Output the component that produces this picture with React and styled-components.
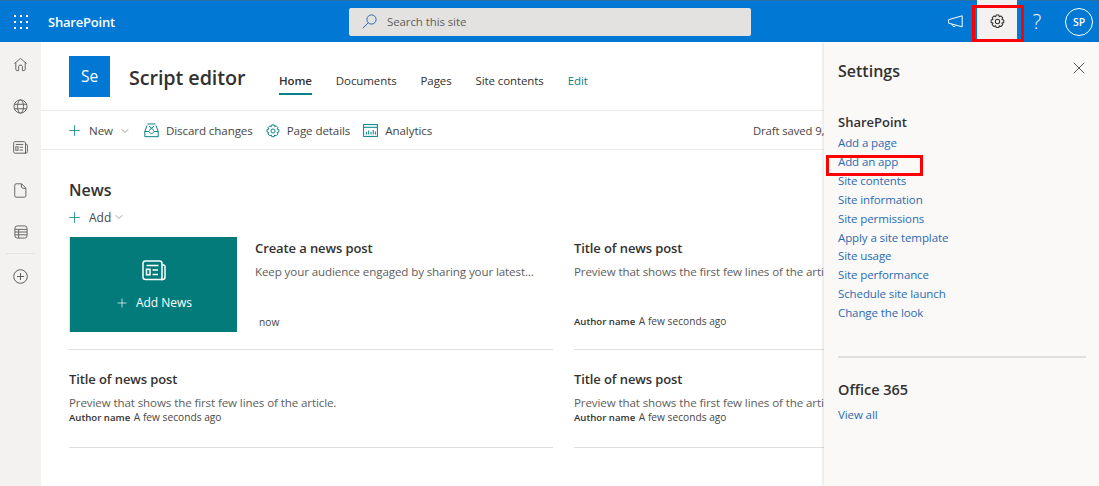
import styled, { createGlobalStyle } from "styled-components";
import { Plus, ChevronDown, X } from "lucide-react";

const Global = createGlobalStyle`
  html, body { margin: 0; padding: 0; background: #fff; }
  body { font-family: "Open Sans", "Noto Sans", sans-serif; color: #323130; overflow: hidden; }
`;

const Page = styled.div`
  position: relative;
  width: 1099px;
  height: 486px;
  overflow: hidden;
  display: flex;
  flex-direction: column;
`;

const TopBar = styled.header`
  height: 41px;
  flex: none;
  background: #0078d4;
  border-top: 1px solid #2b6ea8;
  display: flex;
  align-items: center;
  color: #fff;
`;

const Waffle = styled.div`
  width: 14px;
  height: 14px;
  margin-left: 14px;
  display: grid;
  grid-template-columns: repeat(3, 2px);
  grid-template-rows: repeat(3, 2px);
  gap: 4px;
  span { background: #fff; }
`;

const Brand = styled.div`
  margin-left: 20px;
  width: 301px;
  font-size: 13px;
  font-weight: 600;
  letter-spacing: -0.2px;
`;

const Search = styled.div`
  width: 402px;
  height: 28px;
  background: #e4e2e0;
  border-radius: 2px;
  display: flex;
  align-items: center;
  gap: 10px;
  padding-left: 13px;
  box-sizing: border-box;
  color: #605e5c;
  font-size: 11.5px;
  letter-spacing: -0.1px;
  line-height: 30px;
`;

const BarIcons = styled.div`
  margin-left: auto;
  display: flex;
  align-items: center;
  height: 100%;
`;

const BarButton = styled.div`
  width: ${(p) => p.$w || 40}px;
  height: 42px;
  margin-top: -1px;
  display: flex;
  align-items: center;
  justify-content: center;
  box-sizing: border-box;
  color: ${(p) => (p.$active ? "#323130" : "#fff")};
  background: ${(p) => (p.$active ? "#f3f2f1" : "transparent")};
  font-size: 20px;
  font-weight: 300;
`;

const Avatar = styled.div`
  width: 28px;
  height: 28px;
  border: 1px solid #fff;
  border-radius: 50%;
  box-sizing: border-box;
  display: flex;
  align-items: center;
  justify-content: center;
  font-size: 10.5px;
  font-weight: 600;
  color: #fff;
  margin: 0 6px 0 8px;
`;

const Body = styled.div`
  flex: 1;
  display: flex;
  min-height: 0;
`;

const Rail = styled.nav`
  width: 41px;
  flex: none;
  background: #f3f2f1;
  display: flex;
  flex-direction: column;
  align-items: center;
  padding-top: 13.5px;
  box-sizing: border-box;
  color: #605e5c;
`;

const RailItem = styled.div`
  height: 42.2px;
  width: 100%;
  display: flex;
  justify-content: center;
  padding-top: 1px;
  box-sizing: border-box;
`;

const RailRule = styled.div`
  width: 29px;
  height: 1px;
  background: #e6e4e2;
  margin: -13.5px 0 14px;
`;

const Main = styled.main`
  flex: 1;
  min-width: 0;
  overflow: hidden;
`;

const SiteHeader = styled.div`
  height: 68px;
  padding-left: 28px;
  display: flex;
  align-items: center;
  border-bottom: 1px solid #edebe9;
`;

const SiteLogo = styled.div`
  width: 41px;
  height: 41px;
  background: #0078d4;
  color: #fff;
  display: flex;
  align-items: center;
  justify-content: center;
  font-size: 15.5px;
`;

const SiteTitle = styled.div`
  margin-left: 19px;
  width: 150px;
  font-size: 19.8px;
  font-weight: 600;
  letter-spacing: -0.1px;
  padding-top: 2px;
  color: #323130;
`;

const SiteNav = styled.div`
  display: flex;
  gap: 24px;
  align-self: stretch;
  align-items: center;
  padding-top: 11px;
  box-sizing: border-box;
`;

const NavLink = styled.div`
  font-size: 11.5px;
  letter-spacing: -0.1px;
  line-height: 24px;
  color: ${(p) => (p.$edit ? "#038387" : "#323130")};
  font-weight: ${(p) => (p.$on ? 600 : 400)};
  border-bottom: 2px solid ${(p) => (p.$on ? "#038387" : "transparent")};
`;

const CommandBar = styled.div`
  height: 39px;
  padding: 1px 0 0 28px;
  box-sizing: border-box;
  display: flex;
  align-items: center;
  border-bottom: 1px solid #edebe9;
  font-size: 11.6px;
  letter-spacing: -0.1px;
  color: #484644;
  white-space: nowrap;
`;

const Command = styled.div`
  display: flex;
  align-items: center;
  gap: ${(p) => p.$gap || 7}px;
  margin-right: ${(p) => p.$mr || 13}px;
  color: #484644;
`;

const TealPlus = styled(Plus)`
  margin-left: -3px;
  color: #038387;
`;

const Draft = styled.div`
  margin-left: auto;
  width: 71px;
  overflow: hidden;
  flex: none;
  font-size: 11.3px;
`;

const Content = styled.div`
  padding: 30px 0 0 28px;
`;

const SectionTitle = styled.div`
  font-size: 16px;
  font-weight: 600;
  line-height: 20px;
  color: #323130;
`;

const AddRow = styled.div`
  display: flex;
  align-items: center;
  gap: 6px;
  margin-top: 7px;
  height: 20px;
  font-size: 12px;
  color: #484644;
`;

const AddChevron = styled(ChevronDown)`
  margin-left: -4px;
  color: #605e5c;
`;

const NewsGrid = styled.div`
  display: grid;
  grid-template-columns: 484px 484px;
  column-gap: 21px;
  margin-top: 10px;
  width: 990px;
`;

const NewsItem = styled.div`
  height: ${(p) => p.$h}px;
  border-bottom: 1px solid #e1dfdd;
  box-sizing: border-box;
  display: flex;
  padding-top: ${(p) => p.$pt || 0}px;
`;

const AddTile = styled.div`
  width: 168px;
  height: 95px;
  background: #037b7b;
  border-left: 1px solid #d8e8e8;
  box-sizing: border-box;
  flex: none;
  color: #fff;
  display: flex;
  flex-direction: column;
  align-items: center;
  font-size: 12px;
  padding-top: 23px;
`;

const TileAction = styled.div`
  display: flex;
  align-items: center;
  gap: 7px;
  margin-top: 14px;
  line-height: 16px;
`;

const NewsText = styled.div`
  flex: 1;
  min-width: 0;
  margin-left: ${(p) => p.$ml || 0}px;
  height: 95px;
  display: flex;
  flex-direction: column;
`;

const NewsTitle = styled.div`
  font-size: 13px;
  font-weight: 600;
  line-height: 18px;
  letter-spacing: -0.1px;
  margin-top: 2px;
  color: #323130;
`;

const NewsPreview = styled.div`
  font-size: 11.6px;
  line-height: 16px;
  letter-spacing: -0.12px;
  margin-top: 7px;
  color: #605e5c;
  white-space: nowrap;
`;

const NewsMeta = styled.div`
  font-size: 10.2px;
  line-height: 14px;
  color: #484644;
  margin-top: ${(p) => (p.$bottom ? "auto" : "-1px")};
  padding-left: ${(p) => p.$pl || 0}px;
  padding-bottom: ${(p) => (p.$bottom ? 3 : 0)}px;
  b { font-size: 9.6px; font-weight: 600; color: #323130; margin-right: 1px; }
`;

const Panel = styled.aside`
  width: 275px;
  flex: none;
  background: #faf9f8;
  box-shadow: -1px 0 3px rgba(0, 0, 0, 0.12);
  box-sizing: border-box;
  padding: 18px 13px 0 14px;
  position: relative;
  z-index: 1;
`;

const PanelHead = styled.div`
  display: flex;
  justify-content: space-between;
  align-items: center;
  height: 22px;
  font-size: 16px;
  font-weight: 600;
  color: #323130;
`;

const CloseButton = styled.div`
  display: flex;
  color: #484644;
  margin: 0 -3px 6px 0;
`;

const PanelHeading = styled.div`
  font-size: ${(p) => p.$size || 13}px;
  font-weight: 600;
  line-height: 18px;
  color: #323130;
  margin-top: ${(p) => p.$top}px;
`;

const LinkList = styled.div`
  margin-top: ${(p) => p.$top || 3}px;
  display: flex;
  flex-direction: column;
`;

const PanelLink = styled.div`
  font-size: 11.5px;
  line-height: 18.9px;
  letter-spacing: -0.1px;
  color: #2b6ab0;
`;

const PanelRule = styled.div`
  height: 2px;
  background: #e1dfdd;
  margin: 33px 0 0;
`;

const Annotation = styled.div`
  position: absolute;
  left: ${(p) => p.$x}px;
  top: ${(p) => p.$y}px;
  width: ${(p) => p.$w}px;
  height: ${(p) => p.$h}px;
  border: 3px solid #f00;
  box-sizing: border-box;
  pointer-events: none;
  z-index: 5;
`;

const HomeIcon = () => (
  <svg width="15" height="15" viewBox="0 0 16 16" fill="none" stroke="currentColor" strokeWidth="1">
    <path d="M1.5 7L8 1.5 14.5 7M3 6v7.2c0 .7.5 1.3 1.2 1.3H6V10c0-.8.6-1.3 1.3-1.3h1.4c.7 0 1.3.5 1.3 1.3v4.5h1.8c.7 0 1.2-.6 1.2-1.3V6" />
  </svg>
);

const GlobeIcon = () => (
  <svg width="15" height="15" viewBox="0 0 16 16" fill="none" stroke="currentColor" strokeWidth="1">
    <circle cx="8" cy="8" r="7" />
    <ellipse cx="8" cy="8" rx="3.2" ry="7" />
    <path d="M1.3 5.6h13.4M1.3 10.4h13.4" />
  </svg>
);

const NewsIcon = ({ size = 15 }) => (
  <svg width={size} height={size * 0.875} viewBox="0 0 24 21" fill="none" stroke="currentColor" strokeWidth="1.5">
    <path d="M1 3.5C1 2.1 2 1 3.5 1h14C19 1 20 2.1 20 3.5v16H3.5C2 19.5 1 18.4 1 17z" />
    <path d="M20 5h1.5c.9 0 1.5.7 1.5 1.5V17c0 1.4-1.1 2.5-2.5 2.5H19" />
    <path d="M4.5 5.5h12M10.5 10h5.5M10.5 14.5h5.5" />
    <rect x="4.5" y="9.3" width="3.5" height="5.5" />
  </svg>
);

const PageIcon = () => (
  <svg width="13" height="15" viewBox="0 0 14 16" fill="none" stroke="currentColor" strokeWidth="1">
    <path d="M2.2.8h6l4.6 4.6v8.4c0 .8-.6 1.4-1.4 1.4H2.2c-.8 0-1.4-.6-1.4-1.4V2.2C.8 1.4 1.4.8 2.2.8zM8 1v3.2c0 .8.6 1.4 1.4 1.4h3.4" />
  </svg>
);

const ListIcon = () => (
  <svg width="14" height="14" viewBox="0 0 15 15" fill="none" stroke="currentColor" strokeWidth="1">
    <rect x="1" y="1" width="13" height="13" rx="2.5" />
    <path d="M1 4.7h13M1 7.5h13M1 10.5h13M5 4.7V14" />
  </svg>
);

const CirclePlus = () => (
  <svg width="15" height="15" viewBox="0 0 15 15" fill="none" stroke="currentColor" strokeWidth="1">
    <circle cx="7.5" cy="7.5" r="6.8" />
    <path d="M7.5 4v7M4 7.5h7" />
  </svg>
);

const SearchIcon = () => (
  <svg width="15" height="15" viewBox="0 0 15 15" fill="none" stroke="#2b6ab0" strokeWidth="1">
    <circle cx="9.5" cy="5.5" r="4.6" />
    <path d="M6.2 8.8L.8 14.2" />
  </svg>
);

const MegaphoneIcon = () => (
  <svg width="15" height="13" viewBox="0 0 15 13" fill="none" stroke="currentColor" strokeWidth="1">
    <path d="M.7 4.7L14.2.8v11L.7 8.2c-.3-1-.3-2.5 0-3.5zM4 9.2c0 1.7 1.6 2.8 3.3 2.1" />
  </svg>
);

const GearIcon = ({ size = 14, color = "currentColor" }) => (
  <svg width={size} height={size} viewBox="0 0 16 16" fill="none" stroke={color} strokeWidth="1.1">
    <circle cx="8" cy="8" r="2.3" />
    <path d="M6.6 1h2.8l.5 2 1.7-.9 2 2-.9 1.7 2 .6v2.8l-2 .5.9 1.7-2 2-1.7-.9-.5 2H6.6l-.6-2-1.7.9-2-2 .9-1.7-2-.5V6.4l2-.6-.9-1.7 2-2 1.7.9z" strokeLinejoin="round" />
  </svg>
);

const DiscardIcon = () => (
  <svg width="15" height="15" viewBox="0 0 15 15" fill="none" stroke="#038387" strokeWidth="1">
    <path d="M.8 8.5L3 2.5M14.2 8.5L12 2.5M3.5 1h8M.8 8.5v5.2h13.4V8.5H10c-.3 1.2-1.3 2-2.5 2S5.3 9.7 5 8.5zM5 3l5 4.5M10 3L5 7.5" />
  </svg>
);

const ChartIcon = () => (
  <svg width="15" height="13" viewBox="0 0 15 13" fill="none" stroke="#038387" strokeWidth="1">
    <rect x=".6" y=".6" width="13.8" height="11.8" />
    <path d="M.6 3.3h13.8M3.5 10.5V8M5.7 10.5V6.5M8 10.5V8M10.2 10.5V6M12.4 10.5V7.5" />
  </svg>
);

const railIcons = [
  <HomeIcon key="home" />,
  <GlobeIcon key="globe" />,
  <NewsIcon key="news" />,
  <PageIcon key="page" />,
  <ListIcon key="list" />,
];

const sharePointLinks = [
  "Add a page",
  "Add an app",
  "Site contents",
  "Site information",
  "Site permissions",
  "Apply a site template",
  "Site usage",
  "Site performance",
  "Schedule site launch",
  "Change the look",
];

const PREVIEW = "Preview that shows the first few lines of the article.";

const NewsPost = ({ h, pt, bottom }) => (
  <NewsItem $h={h} $pt={pt}>
    <NewsText>
      <NewsTitle>Title of news post</NewsTitle>
      <NewsPreview>{PREVIEW}</NewsPreview>
      <NewsMeta $bottom={bottom}>
        <b>Author name</b> A few seconds ago
      </NewsMeta>
    </NewsText>
  </NewsItem>
);

export default function App() {
  return (
    <Page>
      <Global />
      <TopBar>
        <Waffle>
          {Array.from({ length: 9 }).map((_, i) => (
            <span key={i} />
          ))}
        </Waffle>
        <Brand>SharePoint</Brand>
        <Search>
          <SearchIcon />
          Search this site
        </Search>
        <BarIcons>
          <BarButton $w={43}>
            <MegaphoneIcon />
          </BarButton>
          <BarButton $active>
            <GearIcon size={15} />
          </BarButton>
          <BarButton>?</BarButton>
          <Avatar>SP</Avatar>
        </BarIcons>
      </TopBar>
      <Body>
        <Rail>
          {railIcons.map((icon) => (
            <RailItem key={icon.key}>{icon}</RailItem>
          ))}
          <RailRule />
          <RailItem>
            <CirclePlus />
          </RailItem>
        </Rail>
        <Main>
          <SiteHeader>
            <SiteLogo>Se</SiteLogo>
            <SiteTitle>Script editor</SiteTitle>
            <SiteNav>
              <NavLink $on>Home</NavLink>
              <NavLink>Documents</NavLink>
              <NavLink>Pages</NavLink>
              <NavLink>Site contents</NavLink>
              <NavLink $edit>Edit</NavLink>
            </SiteNav>
          </SiteHeader>
          <CommandBar>
            <Command $gap={6} $mr={13}>
              <TealPlus size={17} strokeWidth={1.1} />
              New
              <ChevronDown size={12} color="#605e5c" strokeWidth={1.2} />
            </Command>
            <Command>
              <DiscardIcon />
              Discard changes
            </Command>
            <Command>
              <GearIcon size={14} color="#038387" />
              Page details
            </Command>
            <Command>
              <ChartIcon />
              Analytics
            </Command>
            <Draft>Draft saved 9,</Draft>
          </CommandBar>
          <Content>
            <SectionTitle>News</SectionTitle>
            <AddRow>
              <TealPlus size={17} strokeWidth={1.1} />
              <span>Add</span>
              <AddChevron size={12} strokeWidth={1.2} />
            </AddRow>
            <NewsGrid>
              <NewsItem $h={113}>
                <AddTile>
                  <NewsIcon size={24} />
                  <TileAction>
                    <Plus size={14} strokeWidth={1.2} />
                    Add News
                  </TileAction>
                </AddTile>
                <NewsText $ml={18}>
                  <NewsTitle>Create a news post</NewsTitle>
                  <NewsPreview>Keep your audience engaged by sharing your latest...</NewsPreview>
                  <NewsMeta $bottom $pl={4}>now</NewsMeta>
                </NewsText>
              </NewsItem>
              <NewsPost h={113} bottom />
              <NewsPost h={98} pt={18} />
              <NewsPost h={98} pt={18} />
            </NewsGrid>
          </Content>
        </Main>
        <Panel>
          <PanelHead>
            Settings
            <CloseButton>
              <X size={20} strokeWidth={1.1} />
            </CloseButton>
          </PanelHead>
          <PanelHeading $top={31}>SharePoint</PanelHeading>
          <LinkList>
            {sharePointLinks.map((label) => (
              <PanelLink key={label}>{label}</PanelLink>
            ))}
          </LinkList>
          <PanelRule />
          <PanelHeading $top={23} $size={14.5}>Office 365</PanelHeading>
          <LinkList $top={7}>
            <PanelLink>View all</PanelLink>
          </LinkList>
        </Panel>
      </Body>
      <Annotation $x={972} $y={5} $w={52} $h={37} />
      <Annotation $x={826} $y={155} $w={97} $h={21} />
    </Page>
  );
}
